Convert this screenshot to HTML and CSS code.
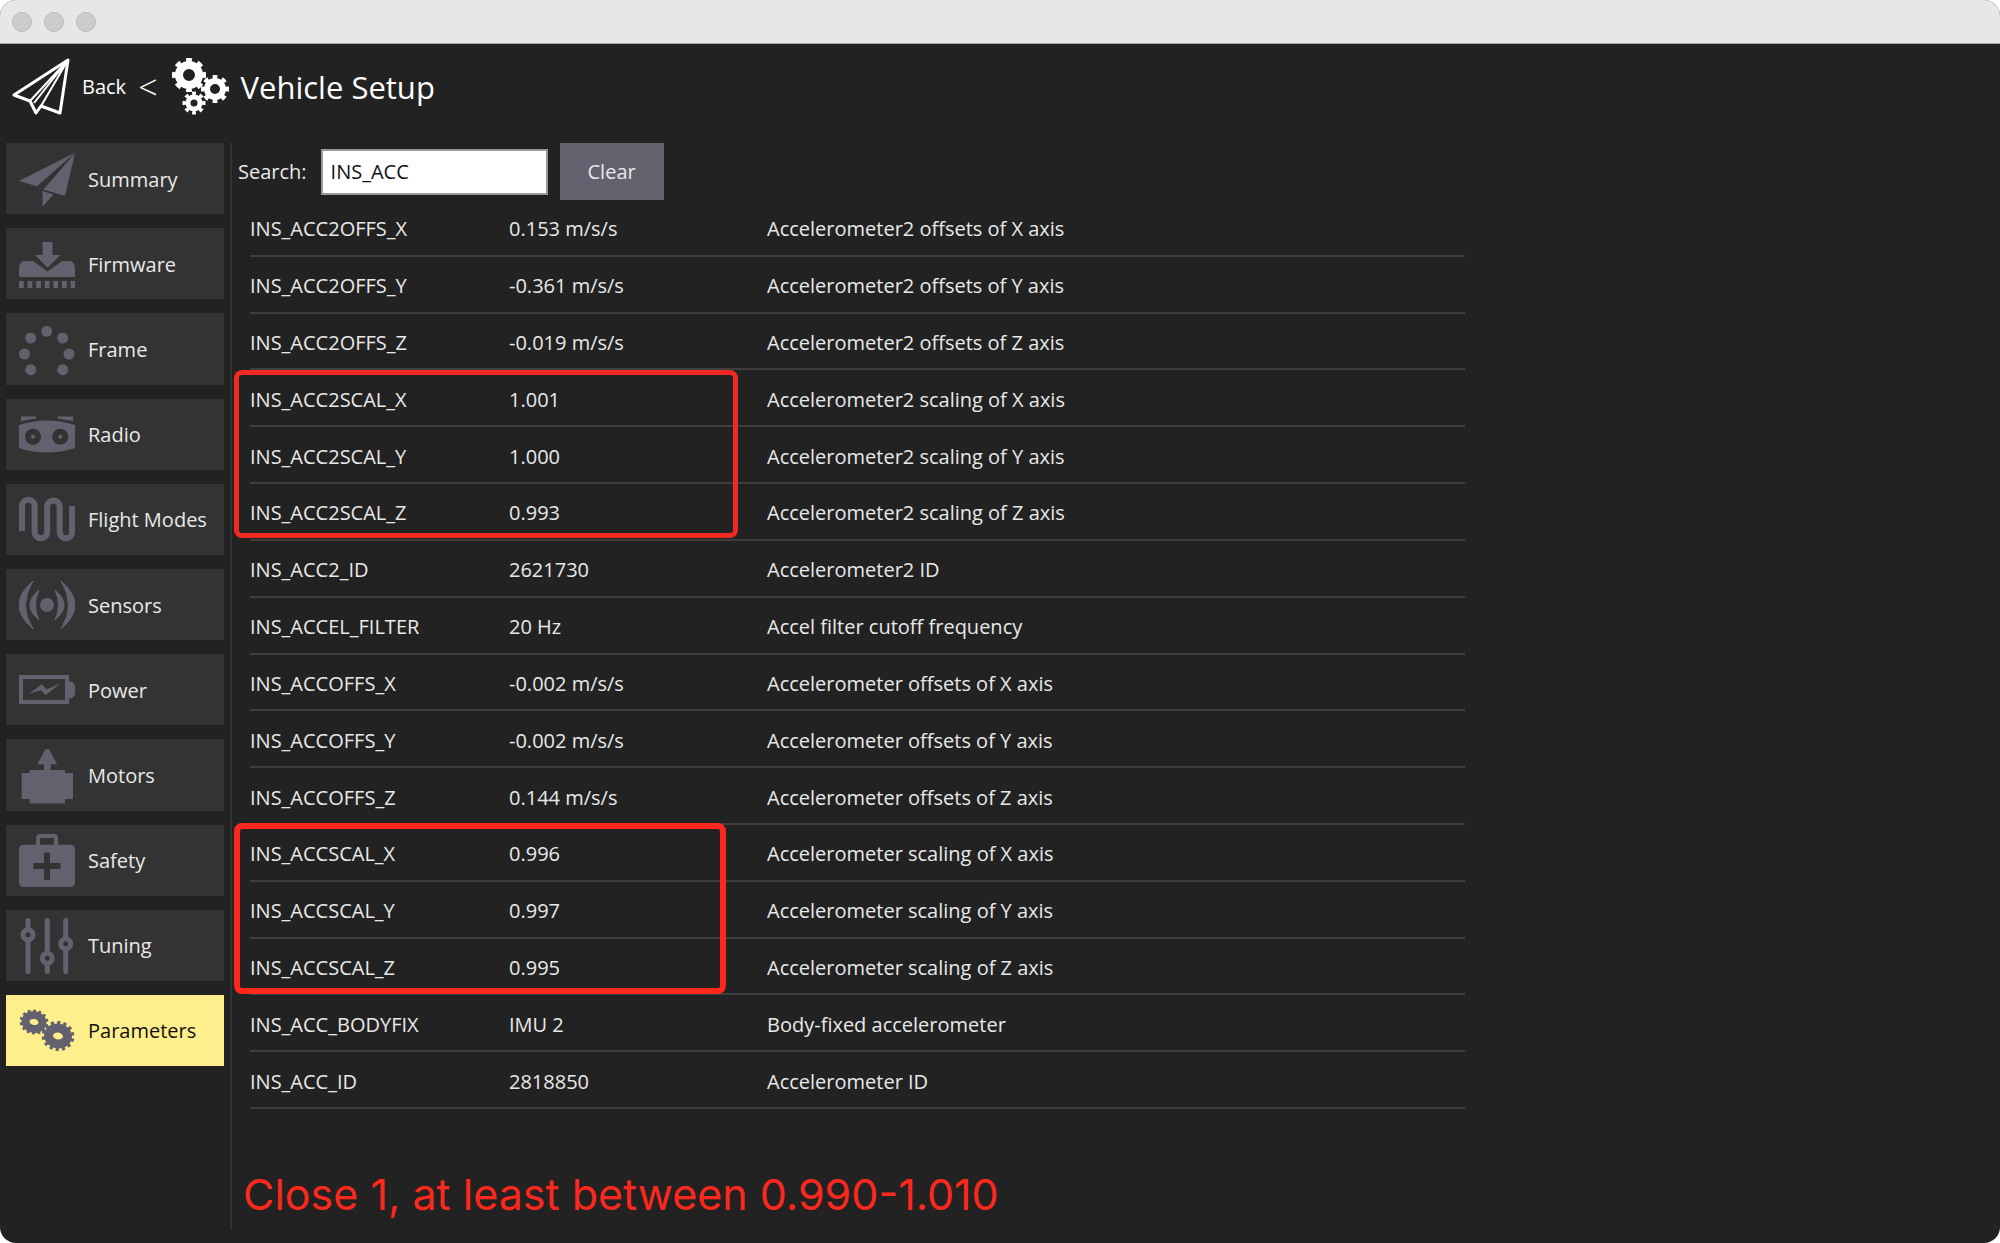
FILE: index.html
```html
<!DOCTYPE html>
<html lang="en">
<head>
<meta charset="utf-8">
<title>Vehicle Setup</title>
<link rel="stylesheet" href="styles.css">
</head>
<body>
<div class="window">
  <div class="titlebar"><span class="dot"></span><span class="dot"></span><span class="dot"></span></div>
  <header class="toolbar">
    <button class="back" type="button">
      <svg class="icon" viewBox="0 0 58 58" fill="none" stroke="currentColor" stroke-linejoin="round">
        <path stroke-width="3" d="M2 37 56 2 48 55 29 48 24 55 18 43Z"/>
        <path stroke-width="2" d="M56 2 18 43M56 2 22 45M56 2 29 48"/>
      </svg>
      <span>Back</span>
      <span class="chevron">&lt;</span>
    </button>
    <svg class="icon gears" viewBox="0 0 58 58" fill="none" stroke="currentColor">
      <g><circle cx="18" cy="17" r="10" stroke-width="8"/><circle cx="18" cy="17" r="15" stroke-width="4" pathLength="16" stroke-dasharray="1 1" stroke-dashoffset=".5"/></g>
      <g><circle cx="44" cy="31" r="8" stroke-width="6"/><circle cx="44" cy="31" r="12" stroke-width="4" pathLength="16" stroke-dasharray="1 1" stroke-dashoffset=".5"/></g>
      <g><circle cx="23" cy="45" r="6" stroke-width="5"/><circle cx="23" cy="45" r="9.500" stroke-width="4" pathLength="16" stroke-dasharray="1 1" stroke-dashoffset=".5"/></g>
    </svg>
    <h1>Vehicle Setup</h1>
  </header>
  <div class="body">
    <nav class="sidebar">
      <button type="button"><svg class="icon" viewBox="0 0 56 56" fill="currentColor"><path d="M0 29 56 .7 18 34.300Z"/><path d="M56 1 46 44 24.500 37.500Z"/><path d="M23.500 39 34.500 42.500 23.500 54.500Z"/></svg>Summary</button>
      <button type="button"><svg class="icon" viewBox="0 0 56 56" fill="currentColor"><path d="M23.500 5h10v13h8L28.500 30.500 16 18h7.500Z"/><path d="M4 24h10l14.500 10.500L43 24h9q4 2 4 8v8H0v-8q0-6 4-8Z"/><path fill="none" stroke="currentColor" stroke-width="7" stroke-dasharray="4.700 3.900" d="M0 47.500h56.500"/></svg>Firmware</button>
      <button type="button"><svg class="icon" viewBox="0 0 56 56" fill="currentColor"><circle cx="27.700" cy="9.300" r="5.500"/><circle cx="11.700" cy="16" r="5.500"/><circle cx="43.700" cy="16" r="5.500"/><circle cx="5.500" cy="32" r="5.500"/><circle cx="50" cy="32" r="5.500"/><circle cx="11.700" cy="47.700" r="5.500"/><circle cx="43.700" cy="47.700" r="5.500"/></svg>Frame</button>
      <button type="button"><svg class="icon" viewBox="0 0 56 56" fill="currentColor"><path d="M2 9.500h15v2L2 14ZM54 9.500H38.500v2L54 14Z"/><path fill-rule="evenodd" d="M0 18q28-9 56 0v23q-28 9-56 0ZM14 21.700a8 8 0 1 0 .01 0ZM41.300 21.700a8 8 0 1 0 .01 0Z"/><circle cx="14" cy="29.700" r="2"/><circle cx="41.300" cy="29.700" r="2"/></svg>Radio</button>
      <button type="button"><svg class="icon" viewBox="0 0 56 56" fill="none" stroke="currentColor" stroke-width="6"><path d="M3 39V14a6.300 6.300 0 0 1 12.600 0v26a6.300 6.300 0 0 0 12.600 0V14a6.300 6.300 0 0 1 12.500 0v26a6.200 6.200 0 0 0 12.400 0V14"/></svg>Flight Modes</button>
      <button type="button"><svg class="icon" viewBox="0 0 56 56" fill="currentColor"><circle cx="28" cy="27" r="7"/><path d="M14 3Q-14 27 14 51-1 27 14 3ZM42 3q28 24 0 48Q57 27 42 3ZM20 12Q2 27 20 42 13 27 20 12ZM36 12q18 15 0 30 7-15 0-30Z" stroke="currentColor"/></svg>Sensors</button>
      <button type="button"><svg class="icon" viewBox="0 0 56 56" fill="currentColor"><path fill="none" stroke="currentColor" stroke-width="4" d="M2 14h46v25H2Z"/><path d="M50 18.500h3l3 4v9l-3 4h-3ZM10 30.700 22.700 21.300 27.700 26.300 41 20.700 26.700 32.300 21.700 27.300Z"/></svg>Power</button>
      <button type="button"><svg class="icon" viewBox="0 0 56 56" fill="currentColor"><path d="M26 2q2.300-2 4.600 0L38 16.300h-6.300V22H46v3h8v26h-8v4.500H10.700V51h-8V25h8v-3H25v-5.700h-6.700Z"/></svg>Motors</button>
      <button type="button"><svg class="icon" viewBox="0 0 56 56" fill="currentColor"><path fill="none" stroke="currentColor" stroke-width="4" d="M19 12V5q0-2 2-2h14q2 0 2 2v7"/><path fill-rule="evenodd" d="M5 11.700h46q5 0 5 5V49q0 5-5 5H5q-5 0-5-5V16.700q0-5 5-5ZM25 19.500v10.500H14.500v6H25v11h6V36h10.500v-6H31V19.500Z"/></svg>Safety</button>
      <button type="button"><svg class="icon" viewBox="0 0 56 56" fill="none" stroke="currentColor" stroke-width="5" stroke-linecap="round"><path d="M9 2.500V10M9 24v29.500M28.300 2.500V33M28.300 47v6.500M46.700 2.500V18M46.700 32v21.500"/><circle cx="9" cy="16.700" r="5"/><circle cx="28.300" cy="40.300" r="5"/><circle cx="46.700" cy="25.700" r="5"/></svg>Tuning</button>
      <button type="button" class="active" aria-current="page"><svg class="icon" viewBox="0 0 56 56" fill="none" stroke="currentColor"><g transform="rotate(10 15 19)"><ellipse cx="15" cy="19" rx="8.500" ry="7" stroke-width="8"/><ellipse cx="15" cy="19" rx="13" ry="11" stroke-width="3" pathLength="28" stroke-dasharray="1 1"/></g><g transform="rotate(10 39 33)"><ellipse cx="39" cy="33" rx="9.500" ry="8" stroke-width="9"/><ellipse cx="39" cy="33" rx="14.500" ry="13" stroke-width="4" pathLength="28" stroke-dasharray="1 1"/></g></svg>Parameters</button>
    </nav>
    <main class="content">
      <form class="search">
        <label for="search">Search:</label>
        <input id="search" type="text" value="INS_ACC">
        <button type="button">Clear</button>
      </form>
      <div class="params">
        <table>
          <colgroup><col class="col-name"><col class="col-value"><col></colgroup>
          <tbody>
            <tr><td>INS_ACC2OFFS_X</td><td>0.153 m/s/s</td><td>Accelerometer2 offsets of X axis</td></tr>
            <tr><td>INS_ACC2OFFS_Y</td><td>-0.361 m/s/s</td><td>Accelerometer2 offsets of Y axis</td></tr>
            <tr><td>INS_ACC2OFFS_Z</td><td>-0.019 m/s/s</td><td>Accelerometer2 offsets of Z axis</td></tr>
            <tr><td>INS_ACC2SCAL_X</td><td>1.001</td><td>Accelerometer2 scaling of X axis</td></tr>
            <tr><td>INS_ACC2SCAL_Y</td><td>1.000</td><td>Accelerometer2 scaling of Y axis</td></tr>
            <tr><td>INS_ACC2SCAL_Z</td><td>0.993</td><td>Accelerometer2 scaling of Z axis</td></tr>
            <tr><td>INS_ACC2_ID</td><td>2621730</td><td>Accelerometer2 ID</td></tr>
            <tr><td>INS_ACCEL_FILTER</td><td>20 Hz</td><td>Accel filter cutoff frequency</td></tr>
            <tr><td>INS_ACCOFFS_X</td><td>-0.002 m/s/s</td><td>Accelerometer offsets of X axis</td></tr>
            <tr><td>INS_ACCOFFS_Y</td><td>-0.002 m/s/s</td><td>Accelerometer offsets of Y axis</td></tr>
            <tr><td>INS_ACCOFFS_Z</td><td>0.144 m/s/s</td><td>Accelerometer offsets of Z axis</td></tr>
            <tr><td>INS_ACCSCAL_X</td><td>0.996</td><td>Accelerometer scaling of X axis</td></tr>
            <tr><td>INS_ACCSCAL_Y</td><td>0.997</td><td>Accelerometer scaling of Y axis</td></tr>
            <tr><td>INS_ACCSCAL_Z</td><td>0.995</td><td>Accelerometer scaling of Z axis</td></tr>
            <tr><td>INS_ACC_BODYFIX</td><td>IMU 2</td><td>Body-fixed accelerometer</td></tr>
            <tr><td>INS_ACC_ID</td><td>2818850</td><td>Accelerometer ID</td></tr>
          </tbody>
        </table>
        <span class="mark mark-acc2"></span>
        <span class="mark mark-acc"></span>
      </div>
      <p class="note">Close 1, at least between 0.990-1.010</p>
    </main>
  </div>
</div>
</body>
</html>
```
FILE: styles.css
```css
* { box-sizing: border-box; }
body {
  margin: 0;
  background: #fff;
  color: #e9e9e9;
  font: 20px/28px "Open Sans", "Noto Sans", sans-serif;
}
button, input { font: inherit; color: inherit; border: 0; margin: 0; border-radius: 0; }
.window {
  display: flex;
  flex-direction: column;
  min-height: 100vh;
  border-radius: 16px;
  overflow: hidden;
  background: #222;
}
.titlebar {
  display: flex;
  align-items: center;
  gap: 12px;
  height: 44px;
  padding-left: 12px;
  background: #e6e7e9;
  border-bottom: 1px solid #aaa;
}
.dot {
  width: 20px;
  height: 20px;
  border-radius: 50%;
  background: #cbccce;
  border: 1px solid #bbbcbe;
}
.toolbar {
  display: flex;
  align-items: center;
  height: 99px;
  padding: 0 12px 14px;
  color: #fff;
}
.icon { display: block; flex: none; width: 56px; height: 56px; }
.toolbar .icon { width: 58px; height: 58px; }
.back {
  display: flex;
  align-items: center;
  gap: 12px;
  padding: 0;
  background: none;
}
.chevron { font-size: 34px; font-weight: 300; }
.gears { margin: 0 12px 0 13px; }
h1 { margin: 0; font-size: 31px; line-height: 44px; font-weight: 400; }
.body { display: flex; flex: 1; padding: 0 6px 14px; }
.sidebar {
  display: flex;
  flex-direction: column;
  gap: 14px;
  flex: none;
  align-self: flex-start;
  width: 218px;
  min-height: 923px;
}
.sidebar button {
  display: flex;
  flex: 1;
  align-items: center;
  gap: 13px;
  padding: 2px 0 0 13px;
  background: #333;
  white-space: nowrap;
}
.sidebar .icon { color: #64616f; }
.sidebar .active { background: #ffef8c; color: #111; }
.content {
  flex: 1;
  min-width: 0;
  margin-left: 6px;
  padding-left: 6px;
  border-left: 2px solid #333;
}
.search { display: flex; align-items: center; height: 57px; }
.search input {
  width: 227px;
  height: 46px;
  margin: 0 12px 0 14px;
  padding: 0 8px;
  background: #fff;
  color: #111;
  border: 2px solid #999;
}
.search button { width: 104px; height: 57px; background: #64616f; }
.params { position: relative; max-width: 1227px; padding-left: 12px; }
table { width: 100%; height: 909px; border-collapse: separate; border-spacing: 0; table-layout: fixed; }
.col-name { width: 259px; }
.col-value { width: 258px; }
td { padding: 4px 0 0; border-bottom: 2px solid #3e3e3e; }
.mark { position: absolute; left: -4px; border: 5px solid #f02a22; border-radius: 8px; }
.mark-acc2 { top: 170px; width: 504px; height: 168px; }
.mark-acc { top: 623px; width: 492px; height: 171px; border-width: 6px; border-color: #fb281e; }
.note {
  margin: 55px 0 0 5px;
  color: #fb281e;
  font: 43px/60px Inter, "Liberation Sans", sans-serif;
}
```
